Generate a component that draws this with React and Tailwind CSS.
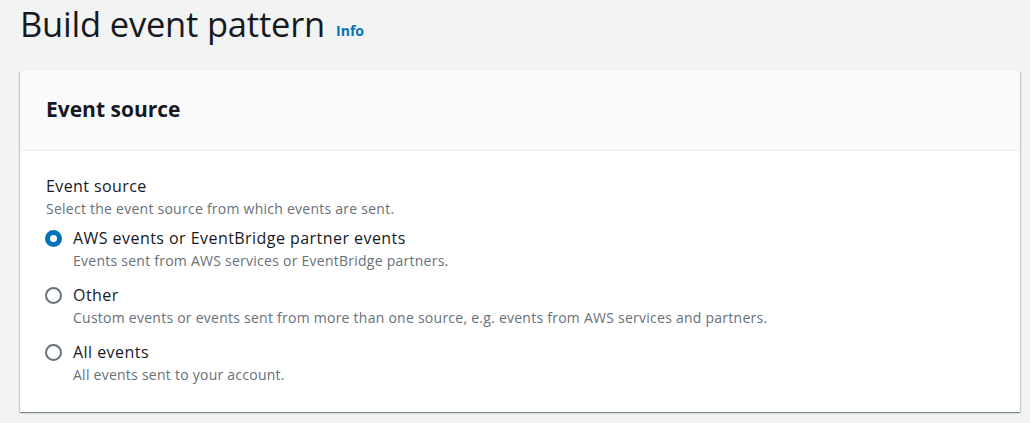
export default function App() {
  const options = [
    { label: "AWS events or EventBridge partner events", desc: "Events sent from AWS services or EventBridge partners.", checked: true },
    { label: "Other", desc: "Custom events or events sent from more than one source, e.g. events from AWS services and partners.", checked: false },
    { label: "All events", desc: "All events sent to your account.", checked: false },
  ];
  return (
    <div className="min-h-[423px] w-[1030px] bg-[#f2f3f3] text-[#16191f]" style={{ fontFamily: '"Open Sans", "Noto Sans", Arial, sans-serif' }}>
      <div className="pl-[20px] pr-[10px]">
        <div className="flex items-end gap-[11px] h-[46px]">
          <h1 className="text-[34.5px] leading-[44px] font-normal tracking-[-0.2px]">Build event pattern</h1>
          <a className="text-[14px] font-bold text-[#0073bb] leading-[20px] mb-[5px]">Info</a>
        </div>
        <div className="mt-[25px] bg-white shadow-[0_1px_1px_0_rgba(0,28,36,0.3),1px_1px_1px_0_rgba(0,28,36,0.15),-1px_1px_1px_0_rgba(0,28,36,0.15)]">
          <div className="h-[80px] bg-[#fafafa] border-b border-[#eaeded] px-[26px] pb-[4px] flex items-center">
            <h2 className="text-[21px] font-bold leading-[28px]">Event source</h2>
          </div>
          <div className="px-[26px] pt-[24px] pb-[27px]">
            <div className="text-[16px] leading-[22px] tracking-[0.4px]">Event source</div>
            <div className="text-[14px] leading-[20px] text-[#687078] mt-[2px] tracking-[0.25px]">Select the event source from which events are sent.</div>
            <div className="flex flex-col gap-[13px] mt-[8px]">
              {options.map((o) => (
                <div key={o.label} className="flex gap-[11px] -ml-[1px]">
                  <div className="pt-[3px]">
                    {o.checked ? (
                      <div className="w-[17px] h-[17px] rounded-full border-[5.5px] border-[#0073bb] bg-white" />
                    ) : (
                      <div className="w-[17px] h-[17px] rounded-full border-[2px] border-[#687078] bg-white" />
                    )}
                  </div>
                  <div>
                    <div className="text-[16px] leading-[22px] tracking-[0.45px]">{o.label}</div>
                    <div className="text-[14px] leading-[20px] text-[#687078] mt-[2px] tracking-[0.25px]">{o.desc}</div>
                  </div>
                </div>
              ))}
            </div>
          </div>
        </div>
      </div>
    </div>
  );
}
